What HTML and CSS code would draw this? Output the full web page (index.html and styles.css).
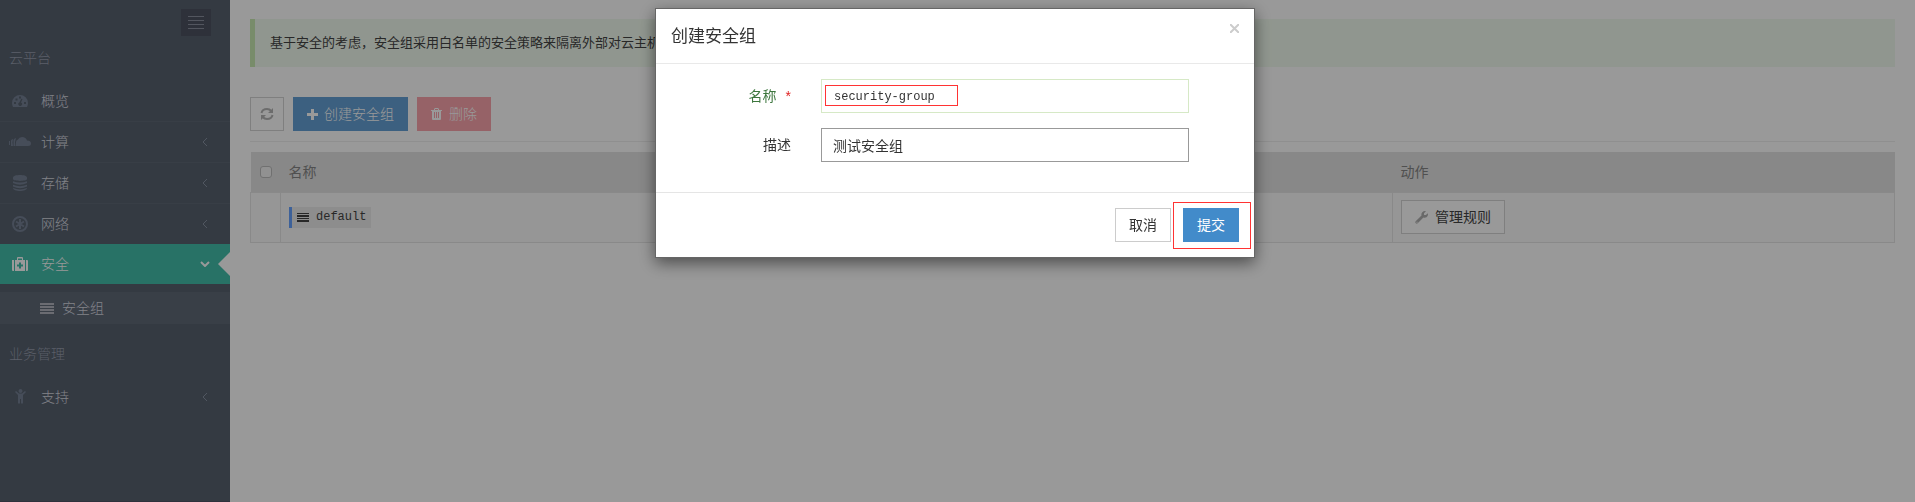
FILE: index.html
```html
<!DOCTYPE html>
<html lang="zh-CN">
<head>
<meta charset="utf-8">
<title>安全组</title>
<link rel="stylesheet" href="styles.css">
</head>
<body>
<div class="app">
  <aside class="sidebar">
    <div class="sidebar-top">
      <button class="toggle" type="button" aria-label="菜单"><svg width="16" height="13" viewBox="0 0 16 13"><path fill="currentColor" d="M0 0h16v1H0zM0 4h16v1H0zM0 8h16v1H0zM0 12h16v1H0z"/></svg></button>
    </div>
    <h2 class="section">云平台</h2>
    <nav class="menu">
      <a class="item" href="#"><span class="ico"><svg width="16" height="12" viewBox="0 0 16 12"><path fill="currentColor" fill-rule="evenodd" d="M1 12Q0 10 0 8A8 8 0 0 1 16 8Q16 10 15 12zM2 7h2v2H2zM3.500 3.500h2v2h-2zM7 1.500h2v2H7zM12 7h2v2h-2zM10.500 4L9 7.500A1.800 1.800 0 1 1 7.400 7.500L9.300 3.800z"/></svg></span><span class="name">概览</span></a>
      <a class="item" href="#"><span class="ico"><svg width="22" height="10" viewBox="0 0 22 10"><path fill="currentColor" d="M0 4h1v4H0zM2 3.500Q2.500 2 4 2L3.500 5.500 4 9H2zM4.500 3Q5 1.500 7 1L6 5l.5 4h-2zM7 9V5Q7 3 9 2.500Q10 0 13 0Q17 0 18 3.500Q22 3.500 22 6.500Q22 9 19 9z"/></svg></span><span class="name">计算</span><svg class="chev" width="6" height="10" viewBox="0 0 6 10"><path d="M5 1L1 5l4 4"/></svg></a>
      <a class="item" href="#"><span class="ico"><svg width="14" height="16" viewBox="0 0 14 16"><path fill="currentColor" d="M0 2.500C0-.8 14-.8 14 2.500V4C14 6.500 0 6.500 0 4zM0 6.200q7 2.800 14 0V8q-7 3.500-14 0zM0 9.800q7 2.800 14 0v1.800q-7 3.500-14 0zM0 13q7 2.800 14 0c0 4-14 4-14 0z"/></svg></span><span class="name">存储</span><svg class="chev" width="6" height="10" viewBox="0 0 6 10"><path d="M5 1L1 5l4 4"/></svg></a>
      <a class="item" href="#"><span class="ico"><svg width="16" height="16" viewBox="0 0 16 16" fill="none" stroke="currentColor" stroke-width="2"><circle cx="8" cy="8" r="7"/><path d="M8 3v10M4 5.500l8 5M12 5.500l-8 5"/></svg></span><span class="name">网络</span><svg class="chev" width="6" height="10" viewBox="0 0 6 10"><path d="M5 1L1 5l4 4"/></svg></a>
      <a class="item active" href="#"><span class="ico"><svg width="16" height="15" viewBox="0 0 16 15"><path fill="currentColor" fill-rule="evenodd" d="M0 3h2v11H1q-1 0-1-1zM14 3h1q1 0 1 1v9q0 1-1 1h-1zM3 3h2V1q0-1 1-1h4q1 0 1 1v2h2v11H3zM6 3h4V1.500H6zM7 5.500v2H5v2h2v2h2v-2h2v-2H9v-2z"/></svg></span><span class="name">安全</span><svg class="chev" width="10" height="6" viewBox="0 0 10 6"><path d="M1 1l4 4 4-4"/></svg></a>
      <div class="submenu">
        <a class="subitem" href="#"><svg width="14" height="11" viewBox="0 0 14 11"><path fill="currentColor" d="M0 0h14v2H0zM0 3h14v2H0zM0 6h14v2H0zM0 9h14v2H0z"/></svg>安全组</a>
      </div>
    </nav>
    <h2 class="section second">业务管理</h2>
    <nav class="menu">
      <a class="item last" href="#"><span class="ico"><svg width="11" height="15" viewBox="0 0 11 15"><circle cx="5.500" cy="2" r="2" fill="currentColor"/><path fill="currentColor" d="M1 2l3 2.500h3L10 2l1 1-3 3v8.500H6V10H5v4.500H3V6L0 3z"/></svg></span><span class="name">支持</span><svg class="chev" width="6" height="10" viewBox="0 0 6 10"><path d="M5 1L1 5l4 4"/></svg></a>
    </nav>
  </aside>
  <main class="main">
    <div class="note">基于安全的考虑，安全组采用白名单的安全策略来隔离外部对云主机</div>
    <div class="toolbar">
      <button class="btn refresh" type="button" aria-label="刷新"><svg width="14" height="12" viewBox="0 0 14 12"><path fill="none" stroke="currentColor" stroke-width="2" d="M1.500 5C2 2.500 4 1 7 1q2.500 0 4.300 2M12.500 7C12 9.500 10 11 7 11q-2.500 0-4.300-2"/><path fill="currentColor" d="M13 0v5H8zM1 12V7h5z"/></svg></button>
      <button class="btn create" type="button"><svg width="11" height="11" viewBox="0 0 11 11"><path fill="currentColor" d="M4 0h3v4h4v3H7v4H4V7H0V4h4z"/></svg>创建安全组</button>
      <button class="btn delete" type="button"><svg width="11" height="12" viewBox="0 0 11 12"><path fill="currentColor" fill-rule="evenodd" d="M3 2V1l1-1h3l1 1v1h3v1h-1v8q0 1-1 1H2q-1 0-1-1V3H0V2zM4 2h3V1H4zM3 4v6h1V4zM5 4v6h1V4zM7 4v6h1V4z"/></svg>删除</button>
    </div>
    <table class="grid">
      <thead><tr><th class="check"><input type="checkbox" aria-label="全选"></th><th>名称</th><th class="action">动作</th></tr></thead>
      <tbody><tr><td class="check"></td><td><span class="tag"><svg width="12" height="9" viewBox="0 0 12 9"><path fill="currentColor" d="M0 0h12v1H0zM0 2h12v2H0zM0 5h12v1H0zM0 7h12v2H0z"/></svg>default</span></td><td class="action"><button class="btn manage" type="button"><svg width="13" height="13" viewBox="0 0 13 13"><path fill="currentColor" fill-rule="evenodd" d="M11 .3L9 2.200v1.900h1.900L12.800 2.200Q13.500 5 11.500 6.300 10 7 8.400 6.500L2.700 12.300Q1.800 13.200.8 12.300-.2 11.200.7 10.300L6.500 4.600Q6 2.500 7.300 1.200 9-.4 11 .3zM1.500 10.700v1h1v-1z"/></svg>管理规则</button></td></tr></tbody>
    </table>
  </main>
</div>
<div class="backdrop">
  <form class="modal" role="dialog" aria-labelledby="title">
    <header class="modal-head">
      <h1 id="title">创建安全组</h1>
      <button class="close" type="button" aria-label="关闭"><svg width="9" height="9" viewBox="0 0 9 9"><path fill="none" stroke="currentColor" stroke-width="2" d="M0 0l9 9M9 0L0 9"/></svg></button>
    </header>
    <div class="modal-body">
      <div class="row valid"><label for="name">名称<span class="req">*</span></label><div class="field"><input id="name" class="mono" type="text" value="security-group"><span class="mark mark-name"></span></div></div>
      <div class="row"><label for="desc">描述</label><div class="field"><input id="desc" type="text" value="测试安全组"></div></div>
    </div>
    <footer class="modal-foot">
      <button class="btn cancel" type="button">取消</button>
      <div class="submit-wrap"><button class="btn submit" type="button">提交</button><span class="mark mark-submit"></span></div>
    </footer>
  </form>
</div>
</body>
</html>
```
FILE: styles.css
```css
* { box-sizing: border-box; }
body { margin: 0; background: #fff; color: #444; font: 14px/20px "Liberation Sans", "Noto Sans CJK SC", sans-serif; }
h1, h2 { margin: 0; font-weight: 400; }
a { text-decoration: none; }
svg { display: block; flex: none; }
button, input { font: inherit; }
.app { display: flex; min-height: 100vh; }

.sidebar { width: 230px; flex: none; background: #57616e; border-bottom: 1px solid #4d5364; font-weight: 300; }
.sidebar-top { display: flex; justify-content: flex-end; padding: 9px 19px 0 0; }
.toggle { display: flex; align-items: center; justify-content: center; width: 30px; height: 27px; padding: 0; border: 0; background: #4d5362; color: #8a909f; }
.section { padding: 12px 9px 13px; font-size: 14px; font-weight: 300; color: #969dad; }
.section.second { padding: 20px 9px 12px; }
.item { display: flex; align-items: center; height: 41px; padding: 0 22px 0 9px; border-bottom: 1px solid #5e6876; color: #d8dae2; }
.item.last { border-bottom: 0; }
.ico { display: flex; justify-content: center; width: 22px; color: #758094; }
.name { flex: 1; padding-left: 10px; }
.chev { fill: none; stroke: #8791a2; stroke-width: 1; }
.active { position: relative; margin-top: -1px; padding-right: 20px; border: 0; height: 40px; background: #43beaa; color: #fff; }
.active .ico { color: #fff; }
.active .chev { stroke: #fff; stroke-width: 2; }
.active::after { content: ""; position: absolute; right: 0; top: 8px; border: 12px solid transparent; border-left: 0; border-right-color: #fff; }
.submenu { padding-top: 8px; }
.subitem { display: flex; align-items: center; gap: 8px; height: 32px; padding-left: 40px; background: #5f6977; color: #d8dae2; }
.subitem svg { color: #b2b5be; }

.main { flex: 1; min-width: 0; padding: 19px 20px 20px; }
.note { padding: 14px 15px; border-left: 5px solid #c9e9b1; background: #f1fbef; font-size: 13px; white-space: nowrap; overflow: hidden; }
.toolbar { display: flex; gap: 9px; padding: 30px 0 10px; border-bottom: 1px solid #eee; margin-bottom: 10px; }
.btn { display: inline-flex; align-items: center; justify-content: center; gap: 7px; height: 34px; padding: 0 13px; border: 1px solid #ccc; border-radius: 0; background: #fff; color: #333; }
.refresh { width: 34px; padding: 0; border-color: #d4d4d4; color: #b4b4b4; }
.create { border-color: #64a0d5; background: #64a0d5; color: #fff; font-weight: 300; gap: 6px; }
.delete { border-color: #faa3ac; background: #faa3ac; color: #fff; font-weight: 300; }
.manage { color: #444; border-color: #d4d4d4; }
.manage svg { color: #b0b0b0; }

.grid { width: 100%; border-collapse: collapse; table-layout: fixed; }
.grid th { height: 40px; padding: 0 8px; background: #e3e3e3; text-align: left; font-weight: 400; color: #858585; }
.grid td { height: 50px; padding: 0 8px; border: 1px solid #e5e5e5; background: #fafafa; }
.grid .check { width: 30px; }
.grid .action { width: 502px; }
.check input { display: block; appearance: none; width: 12px; height: 12px; margin: 0 0 0 1px; border: 1px solid #bbb; border-radius: 3px; background: #f2f2f2; }
.check input:checked { background: #64a0d5; }
.tag { display: inline-flex; align-items: center; gap: 7px; height: 21px; padding: 0 5px; border-left: 3px solid #66a2ff; background: #ebebeb; font: 12px/20px "Liberation Mono", monospace; }

.backdrop { position: fixed; inset: 0; display: flex; align-items: flex-start; justify-content: center; padding: 8px 5px 0 0; background: rgba(0, 0, 0, .4); }
.modal { width: 600px; border: 1px solid #666; background: #fff; color: #333; box-shadow: 0 5px 15px rgba(0, 0, 0, .5); }
.modal-head { display: flex; justify-content: space-between; align-items: flex-start; padding: 15px 15px 14px; border-bottom: 1px solid #e9e9e9; }
.modal-head h1 { font-size: 17px; line-height: 25px; }
.close { padding: 0; border: 0; background: none; color: #ccc; }
.modal-body { display: grid; gap: 15px; padding: 15px 65px 30px 15px; }
.row { display: flex; align-items: center; }
.row label { width: 120px; margin-right: 30px; text-align: right; }
.valid label { color: #3c763d; }
.req { margin-left: 9px; color: #e02222; }
.field { position: relative; flex: 1; }
.field input { display: block; width: 100%; height: 34px; padding: 0 11px; border: 1px solid #999; border-radius: 0; background: #fff; color: #333; outline: 0; }
.valid .field input { border-color: #d6e9c6; }
.field .mono { padding: 2px 12px 0; font: 12px/20px "Liberation Mono", monospace; }
.mark { position: absolute; border: 1px solid #f33; pointer-events: none; }
.mark-name { left: 4px; top: 6px; width: 133px; height: 21px; }
.modal-foot { display: flex; justify-content: flex-end; gap: 12px; padding: 15px; border-top: 1px solid #e5e5e5; }
.submit-wrap { position: relative; }
.submit { border-color: #428bca; background: #428bca; color: #fff; }
.mark-submit { inset: -6px -12px -7px -10px; }
```
